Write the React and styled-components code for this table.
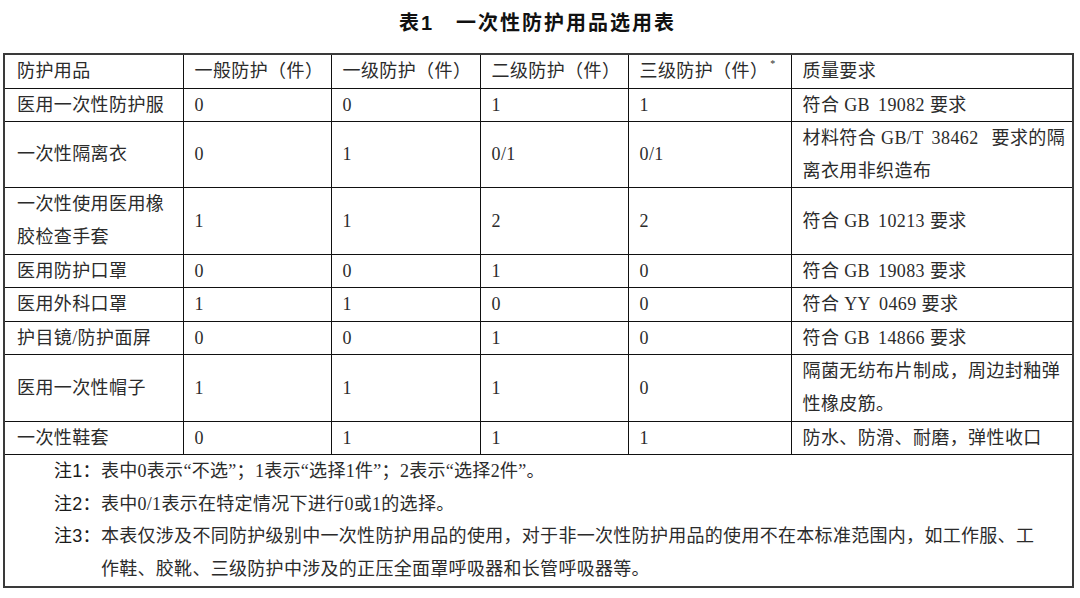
import styled, {createGlobalStyle} from 'styled-components'

const GlobalStyle = createGlobalStyle`
  html, body {
    margin: 0;
    padding: 0;
    background: #fff;
  }
  body {
    font-family: "Liberation Serif", "Noto Sans CJK SC", serif;
    color: #2b2b2b;
  }
`

const Page = styled.div`
  width: 1080px;
  height: 598px;
  padding-left: 3px;
  box-sizing: border-box;
  overflow: hidden;
`

const Title = styled.h1`
  width: 1069px;
  height: 53px;
  margin: 0;
  display: flex;
  align-items: center;
  justify-content: center;
  gap: 22px;
  font-family: "Liberation Sans", "Noto Sans CJK SC", sans-serif;
  font-size: 20px;
  font-weight: 700;
  letter-spacing: 2px;
  color: #111;
  padding-bottom: 10px;
  box-sizing: border-box;
`

const Table = styled.table`
  width: 1069px;
  border-collapse: collapse;
  table-layout: fixed;
  border: 2px solid #3a3a3a;
  font-size: 18px;
  line-height: 32.6px;
`

const Cell = styled.td`
  border: 1px solid #111;
  padding: 0 0 0 ${p => (p.$first ? 12 : 11)}px;
  vertical-align: middle;
  white-space: nowrap;
  letter-spacing: 0.4px;
  font-weight: 400;
  text-align: left;
`

const Sup = styled.sup`
  font-size: 10px;
  line-height: 0;
  position: relative;
  top: -3px;
  margin-left: 2px;
`

const Wide = styled.span`
  display: inline-block;
  width: 8px;
`

const NotesCell = styled.td`
  border: 1px solid #111;
  border-bottom: 2px solid #3a3a3a;
  padding: 0 0 0 49px;
  line-height: 32.6px;
`

const NoteLine = styled.div`
  display: flex;
  white-space: nowrap;
  letter-spacing: 0.3px;
`

const NoteLabel = styled.span`
  flex: 0 0 45px;
  font-family: "Liberation Sans", "Noto Sans CJK SC", sans-serif;
  color: #1a1a1a;
`

const NoteBody = styled.div`
  display: flex;
  flex-direction: column;
`

const Std = ({code, tail = '要求'}) => (
  <>符合 {code[0]}<Wide />{code[1]} {tail}</>
)

const rows = [
  {name: ['医用一次性防护服'], vals: ['0', '0', '1', '1'], req: [<Std key="a" code={['GB', '19082']} />]},
  {name: ['一次性隔离衣'], vals: ['0', '1', '0/1', '0/1'], req: [<>材料符合 GB/T<Wide />38462 <Wide />要求的隔</>, '离衣用非织造布']},
  {name: ['一次性使用医用橡', '胶检查手套'], vals: ['1', '1', '2', '2'], req: [<Std key="b" code={['GB', '10213']} />]},
  {name: ['医用防护口罩'], vals: ['0', '0', '1', '0'], req: [<Std key="c" code={['GB', '19083']} />]},
  {name: ['医用外科口罩'], vals: ['1', '1', '0', '0'], req: [<Std key="d" code={['YY', '0469']} />]},
  {name: ['护目镜/防护面屏'], vals: ['0', '0', '1', '0'], req: [<Std key="e" code={['GB', '14866']} />]},
  {name: ['医用一次性帽子'], vals: ['1', '1', '1', '0'], req: ['隔菌无纺布片制成，周边封釉弹', '性橡皮筋。']},
  {name: ['一次性鞋套'], vals: ['0', '1', '1', '1'], req: ['防水、防滑、耐磨，弹性收口']},
]

const notes = [
  {label: '注1：', lines: ['表中0表示“不选”；1表示“选择1件”；2表示“选择2件”。']},
  {label: '注2：', lines: ['表中0/1表示在特定情况下进行0或1的选择。']},
  {label: '注3：', lines: [
    '本表仅涉及不同防护级别中一次性防护用品的使用，对于非一次性防护用品的使用不在本标准范围内，如工作服、工',
    '作鞋、胶靴、三级防护中涉及的正压全面罩呼吸器和长管呼吸器等。',
  ]},
]

const Lines = ({items}) => items.map((l, i) => (
  <span key={i}>{i > 0 && <br />}{l}</span>
))

export default function App() {
  return (
    <Page>
      <GlobalStyle />
      <Title><span>表1</span><span>一次性防护用品选用表</span></Title>
      <Table>
        <colgroup>
          <col style={{width: 179}} />
          <col style={{width: 148}} />
          <col style={{width: 149}} />
          <col style={{width: 148}} />
          <col style={{width: 163}} />
          <col style={{width: 282}} />
        </colgroup>
        <tbody>
          <tr>
            <Cell $first>防护用品</Cell>
            <Cell>一般防护（件）</Cell>
            <Cell>一级防护（件）</Cell>
            <Cell>二级防护（件）</Cell>
            <Cell>三级防护（件）<Sup>*</Sup></Cell>
            <Cell>质量要求</Cell>
          </tr>
          {rows.map((r, i) => (
            <tr key={i}>
              <Cell $first><Lines items={r.name} /></Cell>
              {r.vals.map((v, j) => <Cell key={j}>{v}</Cell>)}
              <Cell><Lines items={r.req} /></Cell>
            </tr>
          ))}
          <tr>
            <NotesCell colSpan={6}>
              {notes.map(n => (
                <NoteLine key={n.label}>
                  <NoteLabel>{n.label}</NoteLabel>
                  <NoteBody>
                    {n.lines.map((l, k) => <span key={k}>{l}</span>)}
                  </NoteBody>
                </NoteLine>
              ))}
            </NotesCell>
          </tr>
        </tbody>
      </Table>
    </Page>
  )
}
